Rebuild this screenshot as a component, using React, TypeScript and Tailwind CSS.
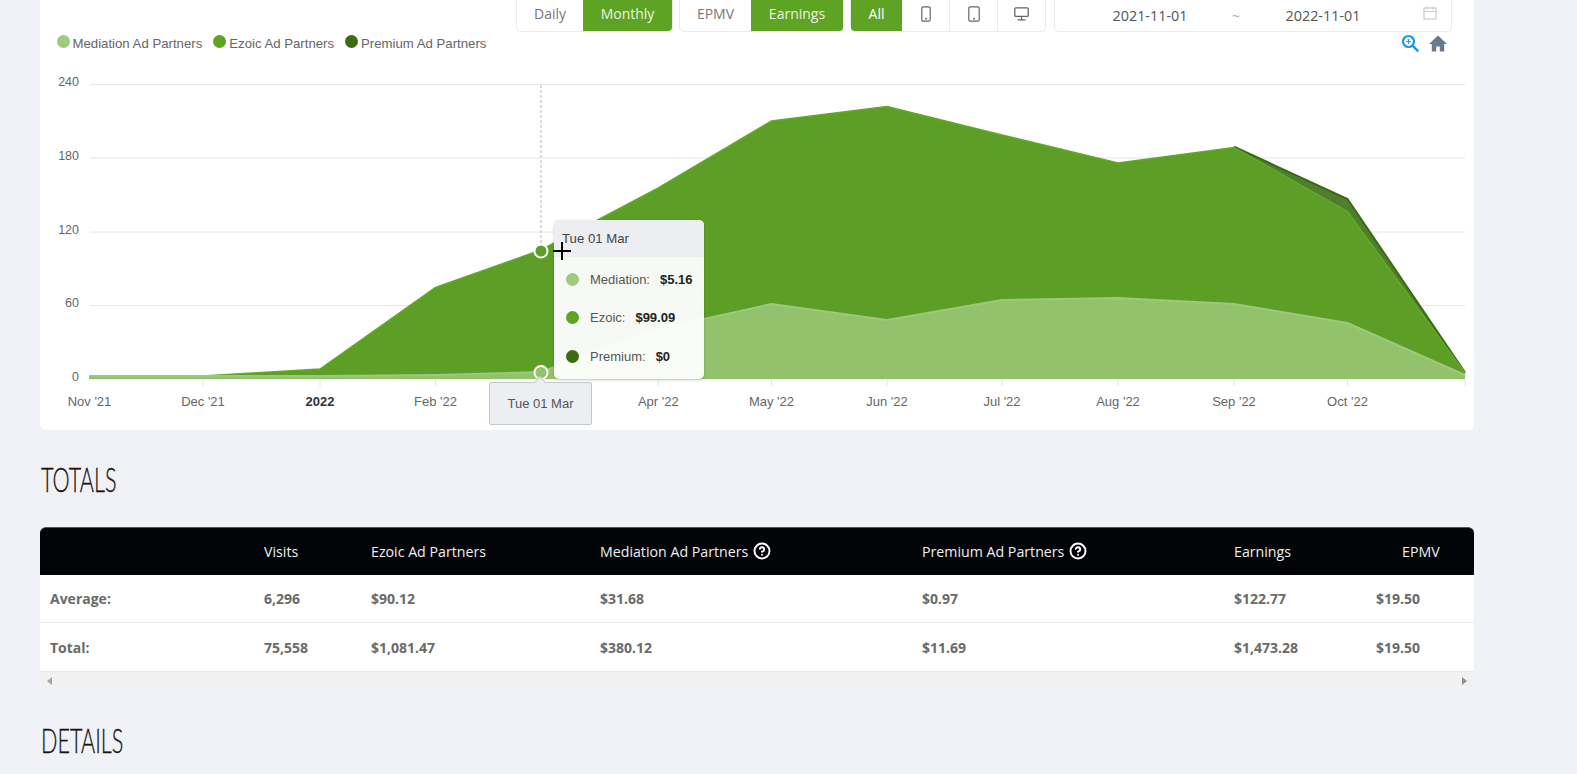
import { CircleHelp } from "lucide-react";

const xs = [89.5, 203, 320, 435.5, 541, 658.3, 771.5, 887, 1002, 1118, 1234, 1347.5, 1465];
const ezoicTop = [376, 376, 369, 287.5, 250, 188, 121, 106.5, 135, 163, 147.5, 211.5, 373];
const mediationTop = [376, 376, 376, 375, 372, 329, 304, 320, 300, 298, 304, 323, 375];
const baseline = 379;

const line = (ys: number[]) => ys.map((y, i) => `${xs[i]},${y}`).join(" ");
const area = (ys: number[]) => `${line(ys)} ${xs[xs.length - 1]},${baseline} ${xs[0]},${baseline}`;

// premium only sits above ezoic for the last few points
const premiumEdge = "1234,146.7 1347.5,199 1465,372.5";
const premiumArea = `${premiumEdge} 1347.5,211.5 1234,147.5`;

const gridLines = [
    { label: "240", y: 84.5 },
    { label: "180", y: 158 },
    { label: "120", y: 232 },
    { label: "60", y: 305.5 },
    { label: "0", y: 379 },
];

const months = [
    { label: "Nov '21", x: 89.5 },
    { label: "Dec '21", x: 203 },
    { label: "2022", x: 320, bold: true },
    { label: "Feb '22", x: 435.5 },
    { label: "Apr '22", x: 658.3 },
    { label: "May '22", x: 771.5 },
    { label: "Jun '22", x: 887 },
    { label: "Jul '22", x: 1002 },
    { label: "Aug '22", x: 1118 },
    { label: "Sep '22", x: 1234 },
    { label: "Oct '22", x: 1347.5 },
];

const SegmentGroup = ({ children, width }: { children: React.ReactNode; width: string }) => (
    <div className={`flex h-[32px] ${width} overflow-hidden rounded-b-[5px] border border-t-0 border-[#e8eaee] bg-white`}>
        {children}
    </div>
);

const PhoneIcon = () => (
    <svg width="10" height="16" viewBox="0 0 10 16" fill="none" stroke="#666" strokeWidth="1.2">
        <rect x="0.8" y="0.8" width="8.4" height="14.4" rx="1.5" />
        <circle cx="5" cy="12.8" r="0.4" />
    </svg>
);

const TabletIcon = () => (
    <svg width="12" height="16" viewBox="0 0 12 16" fill="none" stroke="#666" strokeWidth="1.2">
        <rect x="0.8" y="0.8" width="10.4" height="14.4" rx="1.5" />
        <circle cx="6" cy="12.8" r="0.4" />
    </svg>
);

const MonitorIcon = () => (
    <svg width="15" height="14" viewBox="0 0 15 14" fill="none" stroke="#666" strokeWidth="1.3">
        <rect x="0.8" y="0.8" width="13.4" height="8.6" rx="1" />
        <path d="M7.5 9.5v3M3.5 12.8h8" />
    </svg>
);

const LegendItem = ({ color, label }: { color: string; label: string }) => (
    <div className="flex items-center">
        <span className={`h-[13px] w-[13px] rounded-full ${color} -mt-[3px]`} />
        <span className="ml-[3px] text-[13.2px] text-[#666]">{label}</span>
    </div>
);

const TooltipRow = ({ color, label, value }: { color: string; label: string; value: string }) => (
    <div className="flex h-[38.5px] items-center pl-[12px] text-[13px]">
        <span className={`h-[13px] w-[13px] rounded-full ${color}`} />
        <span className="ml-[11px] text-[#555]">{label}</span>
        <span className="ml-[10px] font-bold text-[#222]">{value}</span>
    </div>
);

const headers = ["", "Visits", "Ezoic Ad Partners", "Mediation Ad Partners", "Premium Ad Partners", "Earnings"];
const columns = "grid grid-cols-[224px_107px_229px_322px_312px_142px_98px]";

const rows = [
    ["Average:", "6,296", "$90.12", "$31.68", "$0.97", "$122.77", "$19.50"],
    ["Total:", "75,558", "$1,081.47", "$380.12", "$11.69", "$1,473.28", "$19.50"],
];

const Heading = ({ children, className }: { children: React.ReactNode; className: string }) => (
    <h2 className={`ml-[41px] h-[40px] origin-left scale-x-[0.655] font-['Lato',sans-serif] text-[33px] leading-[38px] font-light text-[#1a1411] [-webkit-text-stroke:0.3px_#1a1411] ${className}`}>
        {children}
    </h2>
);

export default function App() {
    return (
        <div className="h-[774px] overflow-hidden bg-[#f0f2f7] font-['Open_Sans',sans-serif]">
            <div className="ml-[40px] h-[430px] w-[1434px] rounded-b-[6px] bg-white">
                {/* top toolbar */}
                <div className="flex pl-[476px] text-[14px] leading-[28px]">
                    <SegmentGroup width="w-[157px]">
                        <div className="w-[66px] text-center text-[#777]">Daily</div>
                        <div className="flex-1 bg-[#5fa324] text-center font-medium text-[#eaf4e0]">Monthly</div>
                    </SegmentGroup>
                    <div className="ml-[6px]">
                        <SegmentGroup width="w-[165px]">
                            <div className="w-[71px] text-center text-[#777]">EPMV</div>
                            <div className="flex-1 bg-[#5fa324] text-center font-medium text-[#eaf4e0]">Earnings</div>
                        </SegmentGroup>
                    </div>
                    <div className="ml-[6px]">
                        <SegmentGroup width="w-[196px]">
                            <div className="w-[51px] bg-[#5fa324] text-center font-medium text-white">All</div>
                            <div className="flex w-[48px] items-center justify-center border-r border-[#e8eaee] pb-[4px]"><PhoneIcon /></div>
                            <div className="flex w-[48px] items-center justify-center border-r border-[#e8eaee] pb-[4px]"><TabletIcon /></div>
                            <div className="flex flex-1 items-center justify-center pb-[4px]"><MonitorIcon /></div>
                        </SegmentGroup>
                    </div>
                    <div className="ml-[8px]">
                        <SegmentGroup width="w-[398px]">
                            <div className="w-[171px] pl-[19px] text-center text-[14.4px] leading-[31px] text-[#555]">2021-11-01</div>
                            <div className="w-[20px] text-center leading-[31px] text-[#aaa]">~</div>
                            <div className="w-[154px] text-center text-[14.4px] leading-[31px] text-[#555]">2022-11-01</div>
                            <div className="flex flex-1 items-center justify-center pl-[9px] pb-[5px]">
                                <svg width="14" height="14" viewBox="0 0 14 14" fill="none" stroke="#ccc" strokeWidth="1.2">
                                    <rect x="1" y="2" width="12" height="11" />
                                    <path d="M1 5.5h12M4 .5v3M10 .5v3" />
                                </svg>
                            </div>
                        </SegmentGroup>
                    </div>
                </div>

                {/* legend and zoom controls */}
                <div className="flex h-[23px] items-center gap-[11px] pl-[16.5px] font-['Liberation_Sans',sans-serif]">
                    <LegendItem color="bg-[#9fcb7e]" label="Mediation Ad Partners" />
                    <LegendItem color="bg-[#5fa324]" label="Ezoic Ad Partners" />
                    <LegendItem color="bg-[#3f6a14]" label="Premium Ad Partners" />
                    <div className="ml-auto mr-[27px] flex items-center gap-[9px]">
                        <svg width="19" height="19" viewBox="0 0 19 19" fill="none" stroke="#2196e3" strokeWidth="2.2">
                            <circle cx="7.5" cy="7.5" r="5.5" />
                            <path d="M11.8 11.8l5.5 5.5" strokeWidth="2.6" />
                            <path d="M7.5 5v5M5 7.5h5" strokeWidth="1.2" />
                        </svg>
                        <svg width="18" height="17" viewBox="0 0 18 17" fill="#6b7a8a">
                            <path d="M9 0.5L0 9h2.8v7.5h4.4v-5h3.6v5h4.4V9H18z" />
                        </svg>
                    </div>
                </div>

                {/* area chart */}
                <div className="relative h-[375px] font-['Liberation_Sans',sans-serif]">
                    <svg width="1434" height="375" viewBox="40 55 1434 375" className="block">
                        {gridLines.map((g) => (
                            <g key={g.label}>
                                <line x1="90" x2="1465" y1={g.y} y2={g.y} stroke="#e6e6e6" strokeWidth="1" />
                                <text x="79" y={g.y + 1.5} textAnchor="end" fontSize="12.5" fill="#666">{g.label}</text>
                            </g>
                        ))}
                        <line x1="541" x2="541" y1="85" y2="379" stroke="#b5b5b5" strokeWidth="1" strokeDasharray="3 2" />
                        <polygon points={premiumArea} fill="#4f7f2c" />
                        <polyline points={premiumEdge} fill="none" stroke="#3b6b10" strokeWidth="2" />
                        <polygon points={area(ezoicTop)} fill="#5c9e26" />
                        <polyline points={line(ezoicTop)} fill="none" stroke="#62a828" strokeWidth="1.5" />
                        <polygon points={area(mediationTop)} fill="#93c26d" />
                        <polyline points={line(mediationTop)} fill="none" stroke="#9cc97b" strokeWidth="2" />
                        {xs.slice(1, 4).concat(xs.slice(5)).map((x) => (
                            <line key={x} x1={x} x2={x} y1="379" y2="386" stroke="#e0e4ec" strokeWidth="1" />
                        ))}
                        {months.map((m) => (
                            <text
                                key={m.label}
                                x={m.x}
                                y="405.5"
                                textAnchor="middle"
                                fontSize="13"
                                fontWeight={m.bold ? 700 : 400}
                                fill={m.bold ? "#333" : "#666"}
                            >
                                {m.label}
                            </text>
                        ))}
                        <circle cx="541" cy="251" r="6.5" fill="#5c9e26" stroke="#fff" strokeWidth="2" />
                        <circle cx="541" cy="372.5" r="6.5" fill="#93c26d" stroke="#fff" strokeWidth="2" />
                    </svg>

                    {/* hover tooltip */}
                    <div className="absolute left-[514px] top-[165px] h-[159px] w-[150px] overflow-hidden rounded-[5px] bg-white/95 shadow-[0_1px_3px_rgba(0,0,0,0.2)]">
                        <div className="h-[37px] bg-[#eceef1] pl-[8px] text-[13.2px] leading-[38px] text-[#444]">Tue 01 Mar</div>
                        <div className="pt-[3px]">
                            <TooltipRow color="bg-[#9fcb7e]" label="Mediation:" value="$5.16" />
                            <TooltipRow color="bg-[#5fa324]" label="Ezoic:" value="$99.09" />
                            <TooltipRow color="bg-[#3f6a14]" label="Premium:" value="$0" />
                        </div>
                    </div>

                    {/* crosshair label on the x axis */}
                    <div className="absolute left-[449px] top-[327px] h-[43px] w-[103px] rounded-[2px] border border-[#c4c8cd] bg-[#eceef2] text-center text-[13px] leading-[41px] text-[#555]">
                        <span className="absolute left-[46px] -top-[5px] h-[8px] w-[8px] rotate-45 border-l border-t border-[#c4c8cd] bg-[#eceef2]" />
                        Tue 01 Mar
                    </div>

                    {/* mouse cursor */}
                    <svg className="absolute left-[513px] top-[187px]" width="18" height="18" viewBox="0 0 18 18" stroke="#000" strokeWidth="2">
                        <path d="M9 0v18M0 9h18" />
                    </svg>
                </div>
            </div>

            <Heading className="mt-[30px]">TOTALS</Heading>

            {/* totals table */}
            <div className="ml-[40px] mt-[27px] w-[1434px] text-[14px]">
                <div className={`${columns} h-[48px] items-center rounded-t-[6px] border-t border-[#555] bg-[#020408] text-[14.2px] text-[#eef0f2]`}>
                    {headers.map((h) => (
                        <div key={h} className="flex items-center gap-[5px]">
                            {h}
                            {h.startsWith("Mediation") || h.startsWith("Premium")
                                ? <CircleHelp size={18} strokeWidth={2.6} color="#fff" />
                                : null}
                        </div>
                    ))}
                    <div className="pl-[26px]">EPMV</div>
                </div>
                {rows.map((row, i) => (
                    <div
                        key={row[0]}
                        className={`${columns} h-[48px] items-center bg-white font-bold text-[#6a6a6a] ${i === 0 ? "border-b border-[#e9ebef]" : ""}`}
                    >
                        {row.map((cell, j) => (
                            <div key={j} className={j === 0 ? "pl-[10px]" : ""}>{cell}</div>
                        ))}
                    </div>
                ))}
                <div className="flex h-[18px] items-center justify-between border-t border-[#e8e8e8] bg-[#f1f1f1] px-[7px]">
                    <svg width="5" height="8" viewBox="0 0 5 8" fill="#a5a5a5"><path d="M5 0v8L0 4z" /></svg>
                    <svg width="5" height="8" viewBox="0 0 5 8" fill="#8f8f8f"><path d="M0 0v8l5-4z" /></svg>
                </div>
            </div>

            <Heading className="mt-[32px]">DETAILS</Heading>
        </div>
    );
}
